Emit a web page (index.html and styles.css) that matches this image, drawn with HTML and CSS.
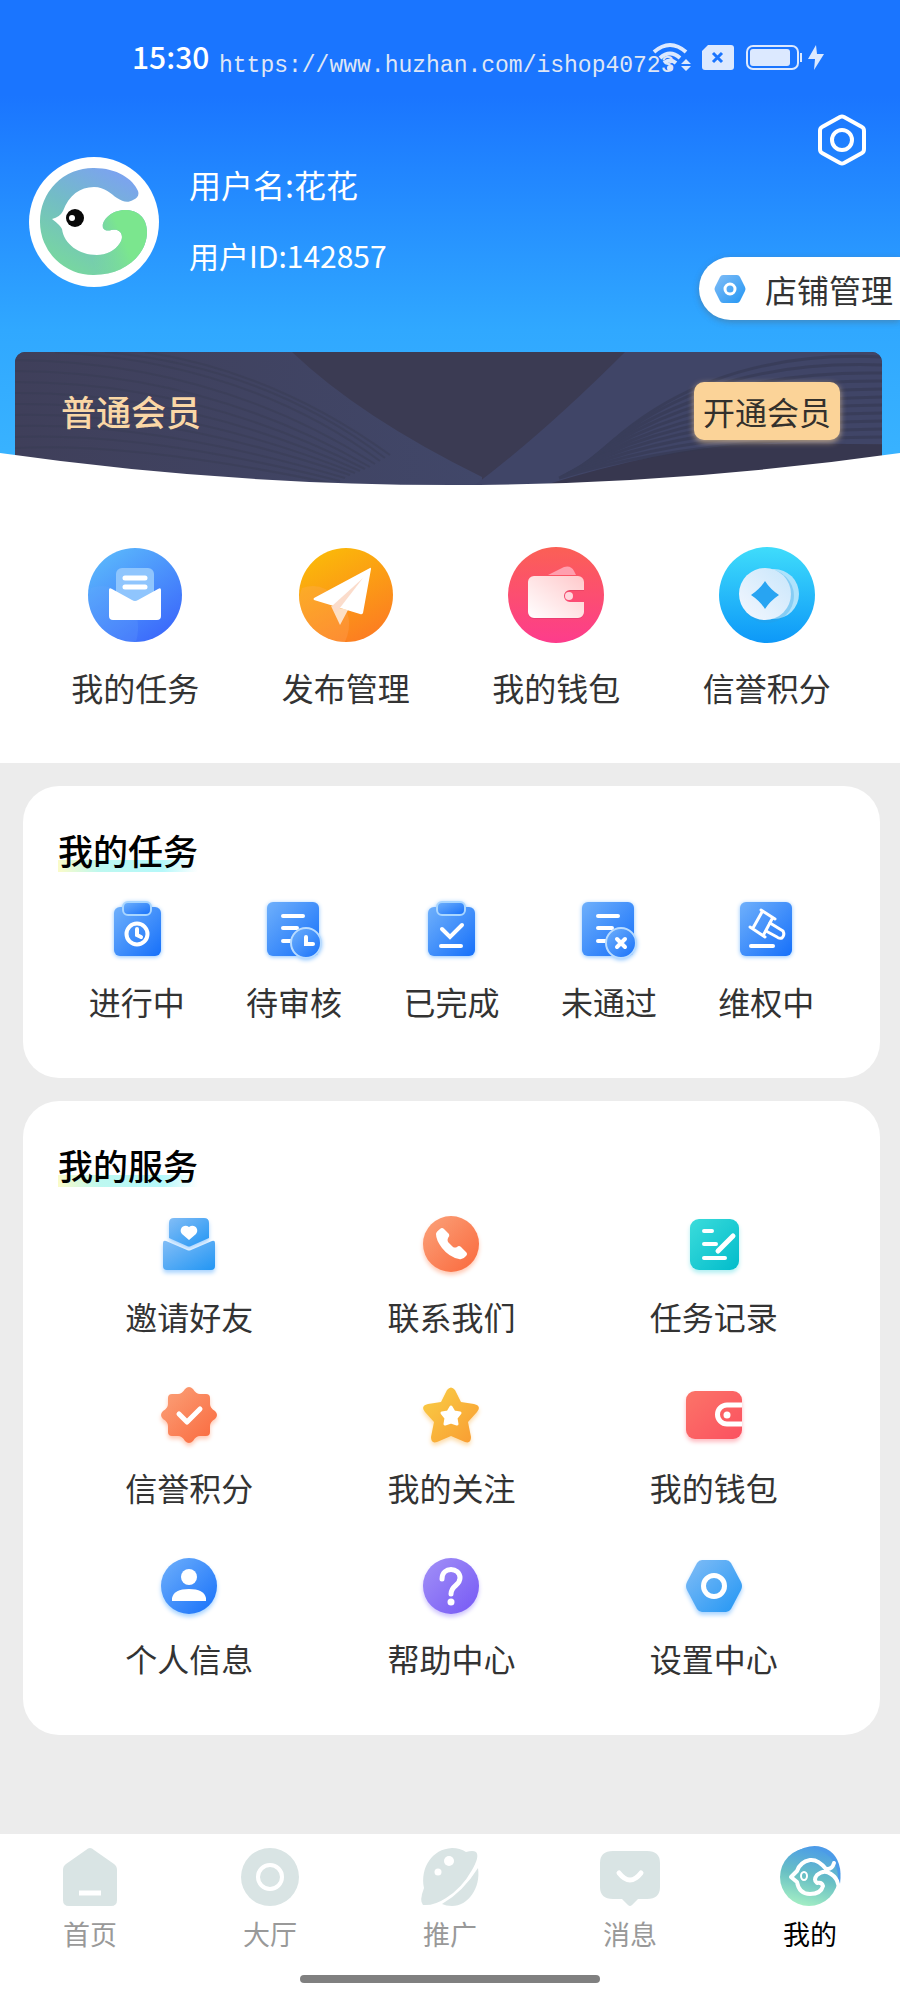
FILE: index.html
```html
<!DOCTYPE html>
<html lang="zh-CN">
<head>
<meta charset="utf-8">
<meta name="viewport" content="width=device-width, initial-scale=1">
<title>我的</title>
<link rel="stylesheet" href="styles.css">
</head>
<body>
<svg class="defs" width="0" height="0" aria-hidden="true">
  <defs>
    <linearGradient id="gBlue" x1="0" y1="0" x2="1" y2="1"><stop offset="0" stop-color="#6fb0fb"/><stop offset="1" stop-color="#1670fa"/></linearGradient>
    <linearGradient id="gMail" x1="0.1" y1="0" x2="0.8" y2="1"><stop offset="0" stop-color="#5cbcfc"/><stop offset="1" stop-color="#3a66fb"/></linearGradient>
    <linearGradient id="gPlane" x1="0.2" y1="0" x2="0.7" y2="1"><stop offset="0" stop-color="#fbbb08"/><stop offset="1" stop-color="#fc7c22"/></linearGradient>
    <linearGradient id="gRed" x1="0" y1="0" x2="0" y2="1"><stop offset="0" stop-color="#fb6055"/><stop offset="1" stop-color="#fd3c8c"/></linearGradient>
    <linearGradient id="gCyan" x1="0" y1="0" x2="0" y2="1"><stop offset="0" stop-color="#3fdcfb"/><stop offset="1" stop-color="#0d98f8"/></linearGradient>
    <linearGradient id="gWalletBody" x1="0" y1="1" x2="1" y2="0"><stop offset="0" stop-color="#fff"/><stop offset="1" stop-color="#ffc9cb"/></linearGradient>
    <linearGradient id="gCoin" x1="1" y1="0" x2="0" y2="1"><stop offset="0" stop-color="#c8e6fb"/><stop offset="1" stop-color="#f4f7fe"/></linearGradient>
    <linearGradient id="gSky" x1="0" y1="0" x2="1" y2="1"><stop offset="0" stop-color="#82bdf6"/><stop offset="1" stop-color="#2296f4"/></linearGradient>
    <linearGradient id="gOrange" x1="0" y1="0" x2="1" y2="1"><stop offset="0" stop-color="#fba27a"/><stop offset="1" stop-color="#fa683c"/></linearGradient>
    <linearGradient id="gGold" x1="0" y1="0" x2="1" y2="1"><stop offset="0" stop-color="#f9cf45"/><stop offset="1" stop-color="#f99b32"/></linearGradient>
    <linearGradient id="gTeal" x1="0" y1="0" x2="1" y2="1"><stop offset="0" stop-color="#3bdcdb"/><stop offset="1" stop-color="#02bccb"/></linearGradient>
    <linearGradient id="gCoral" x1="0" y1="0" x2="1" y2="1"><stop offset="0" stop-color="#fb7468"/><stop offset="1" stop-color="#fb5160"/></linearGradient>
    <linearGradient id="gViolet" x1="0" y1="0" x2="1" y2="1"><stop offset="0" stop-color="#a291f7"/><stop offset="1" stop-color="#7658f5"/></linearGradient>
    <linearGradient id="gBird" x1="0.8" y1="0.1" x2="0.3" y2="1"><stop offset="0" stop-color="#7ba4ee"/><stop offset="0.45" stop-color="#73bcc6"/><stop offset="1" stop-color="#78d89e"/></linearGradient>
    <linearGradient id="gWing" x1="0" y1="0.8" x2="0.6" y2="0.5"><stop offset="0" stop-color="#7be68e" stop-opacity="0"/><stop offset="1" stop-color="#7be68e"/></linearGradient>
    <linearGradient id="gMine" x1="0.6" y1="0" x2="0.35" y2="1"><stop offset="0" stop-color="#4c9ee6"/><stop offset="0.5" stop-color="#69c0c4"/><stop offset="1" stop-color="#a5efc4"/></linearGradient>
    <linearGradient id="gBeam" x1="0" y1="0" x2="1" y2="0"><stop offset="0" stop-color="#3f3f5a"/><stop offset="1" stop-color="#414769"/></linearGradient>
  </defs>
</svg>

<header class="hero">
  <div class="status">
    <time class="clock">15:30</time>
    <svg class="signals" width="174" height="36" viewBox="0 0 174 36" aria-hidden="true">
      <g fill="none" stroke="#dce9ff" stroke-width="4">
        <path d="M4 12Q20 -2 36 12"/><path d="M10 18Q20 9 30 18"/><path d="M14 23Q20 18 26 23"/>
      </g>
      <circle cx="20" cy="28" r="3" fill="#dce9ff"/>
      <path d="M31 24l5-5 5 5zM31 26l5 5 5-5z" fill="#dce9ff"/>
      <path d="M58 5h23a3 3 0 0 1 3 3v19a3 3 0 0 1-3 3H55a3 3 0 0 1-3-3V11z" fill="#dce9ff"/>
      <path d="M63 13l9 9M72 13l-9 9" stroke="#1a75ff" stroke-width="3"/>
      <rect x="97" y="6" width="51" height="23" rx="6" fill="none" stroke="#dce9ff" stroke-width="2"/>
      <rect x="100" y="9" width="40" height="17" rx="3" fill="#dce9ff"/>
      <rect x="150" y="13" width="2" height="9" fill="#dce9ff"/>
      <path d="M166 5L158 19h7l-1 11 10-16h-7z" fill="#dce9ff"/>
    </svg>
    <span class="watermark">https://www.huzhan.com/ishop40723</span>
  </div>

  <div class="profile">
    <svg class="avatar" width="130" height="130" viewBox="0 0 130 130" role="img" aria-label="头像">
      <circle cx="65" cy="65" r="65" fill="#fff"/>
      <path d="M109 34C104 22 88 11 65 11A53 53 0 0 0 11 65A53 53 0 0 0 65 118C95 118 118 98 118 75C118 60 108 53 96 53C82 53 72 64 74 71C77 76 83 72 88 73C94 75 94 82 91 86C86 94 77 98 68 98C50 98 35 87 33 72Q31 68 23 62Q31 60 34 54C40 38 51 30 65 30C76 30 82 37 88 41C94 45 99 46 104 43Q111 40 109 34Z" fill="url(#gBird)"/>
      <path d="M65 118C95 118 118 98 118 75C118 60 108 53 96 53C82 53 72 64 74 71C77 76 83 72 88 73C94 75 94 82 91 86C86 94 77 98 68 98C62 98 62 118 65 118Z" fill="url(#gWing)"/>
      <circle cx="46" cy="61" r="9" fill="#080808"/><circle cx="43" cy="61" r="3" fill="#fff"/>
    </svg>
    <div class="who">
      <p class="who-name">用户名:花花</p>
      <p class="who-id">用户ID:142857</p>
    </div>
    <div class="actions">
      <button class="gear" type="button" aria-label="设置">
        <svg width="48" height="52" viewBox="0 0 48 52" fill="none" stroke="#fff" stroke-width="4" stroke-linejoin="round">
          <path d="M22 3Q24 2 26 3L44 13Q46 14 46 17V35Q46 38 44 39L26 49Q24 50 22 49L4 39Q2 38 2 35V17Q2 14 4 13Z"/>
          <circle cx="24" cy="26" r="10"/>
        </svg>
      </button>
      <button class="shop" type="button">
        <svg width="32" height="32" viewBox="0 0 32 32" aria-hidden="true">
          <path d="M9 2h14q2 0 3 2l5 10q1 2 0 4l-5 10q-1 2-3 2H9q-2 0-3-2L1 18q-1-2 0-4L6 4q1-2 3-2z" fill="url(#gSky)"/>
          <circle cx="16" cy="16" r="5" fill="none" stroke="#fff" stroke-width="3"/>
        </svg>
        店铺管理
      </button>
    </div>
  </div>

  <section class="member">
    <svg class="member-art" viewBox="0 0 867 133" preserveAspectRatio="none" aria-hidden="true">
      <rect width="867" height="133" fill="#3b3b53"/>
      <path d="M0 0H277Q345 65 467 125V133H0Z" fill="url(#gBeam)"/>
      <path d="M610 0Q530 80 460 133H540Q650 98 730 92H867V0Z" fill="#404567"/>
      <path d="M530 133Q650 96 730 93Q800 90 867 93V133Z" fill="#37374f"/>
      <g fill="none" stroke="#343850" stroke-width="3" opacity="0.55">
        <path d="M570 116Q680 -4 867 5"/><path d="M567 117Q675 6 867 13"/><path d="M564 118Q670 18 867 21"/>
        <path d="M561 119Q668 28 867 29"/><path d="M558 120Q666 38 867 37"/><path d="M555 121Q664 48 867 45"/>
        <path d="M552 122Q662 56 867 53"/><path d="M550 123Q662 64 867 61"/><path d="M548 124Q664 72 867 69"/>
        <path d="M546 125Q666 80 867 77"/><path d="M544 126Q668 87 867 85"/>
      </g>
      <g fill="none" stroke="#393d54" stroke-width="2" opacity="0.5">
        <path d="M0 8Q200 10 360 112"/><path d="M0 19Q190 20 355 115"/><path d="M0 30Q180 30 350 117"/>
        <path d="M0 41Q170 40 345 119"/><path d="M0 52Q160 50 340 121"/><path d="M0 63Q150 60 335 123"/>
        <path d="M0 74Q140 70 330 126"/><path d="M0 85Q130 80 325 129"/><path d="M0 96Q120 90 320 132"/>
        <path d="M40 0Q230 10 365 109"/><path d="M90 0Q250 15 370 106"/><path d="M130 0Q260 20 375 103"/>
      </g>
    </svg>
    <h1 class="member-level">普通会员</h1>
    <button class="member-open" type="button">开通会员</button>
  </section>
  <svg class="arc" viewBox="0 0 900 34" preserveAspectRatio="none" aria-hidden="true"><path d="M0 1Q450 65 900 1V34H0Z" fill="#fff"/></svg>
</header>

<nav class="quick" aria-label="快捷入口">
  <a class="tile" href="#tasks">
    <svg width="96" height="96" viewBox="0 0 96 96" aria-hidden="true">
      <circle cx="48" cy="48" r="47" fill="url(#gMail)"/>
      <path d="M2 58A47 47 0 0 0 49 95Q56 70 40 52Q24 34 4 41Q0 50 2 58Z" fill="#6ea8ff" opacity="0.2"/>
      <rect x="29" y="21" width="38" height="40" rx="6" fill="#8fc5fd"/>
      <path d="M38 31h20M38 40h20" stroke="#fff" stroke-width="5" stroke-linecap="round"/>
      <path d="M22 43q0-3 3-1L45 53q3 2 6 0L71 42q3-2 3 1V69q0 4-4 4H26q-4 0-4-4z" fill="#fff"/>
    </svg>
    <span>我的任务</span>
  </a>
  <a class="tile" href="#publish">
    <svg width="96" height="96" viewBox="0 0 96 96" aria-hidden="true">
      <circle cx="48" cy="48" r="47" fill="url(#gPlane)"/>
      <path d="M2 58A47 47 0 0 0 47 95Q58 70 40 52Q24 34 4 41Q0 50 2 58Z" fill="#ffb070" opacity="0.25"/>
      <path d="M33 59L42 78L50 63Z" fill="#fde0c4"/>
      <path d="M72 21Q73 20 73 22L65 66Q64 68 62 67L16 53Q15 52 16 51Z" fill="#fff"/>
      <path d="M65 31L34 59L38 66Z" fill="#fbdccb"/>
    </svg>
    <span>发布管理</span>
  </a>
  <a class="tile" href="#wallet">
    <svg width="96" height="96" viewBox="0 0 96 96" aria-hidden="true">
      <circle cx="48" cy="48" r="48" fill="url(#gRed)"/>
      <path d="M40 28L56 20Q63 18 66 24L68 28Z" fill="#ff9fae"/>
      <path d="M26 30H70a6 6 0 0 1 6 6V44H62a5 5 0 0 0 0 11H76V66a6 6 0 0 1-6 6H26a6 6 0 0 1-6-6V36a6 6 0 0 1 6-6z" fill="#c52a55" opacity="0.3"/>
      <path d="M26 29H70a6 6 0 0 1 6 6V43H62a6 6 0 0 0 0 12H76V65a6 6 0 0 1-6 6H26a6 6 0 0 1-6-6V35a6 6 0 0 1 6-6z" fill="url(#gWalletBody)"/>
      <circle cx="61" cy="49" r="4" fill="#ffd6dc"/>
    </svg>
    <span>我的钱包</span>
  </a>
  <a class="tile" href="#credit">
    <svg width="96" height="96" viewBox="0 0 96 96" aria-hidden="true">
      <circle cx="48" cy="48" r="48" fill="url(#gCyan)"/>
      <circle cx="55" cy="47" r="25" fill="#aee3fc"/>
      <circle cx="48" cy="49" r="27" fill="#2a9be0" opacity="0.3"/>
      <circle cx="46" cy="47" r="26" fill="url(#gCoin)"/>
      <path d="M46 34Q51 42 60 48Q51 54 46 62Q41 54 32 48Q41 42 46 34Z" fill="#28a4f2"/>
    </svg>
    <span>信誉积分</span>
  </a>
</nav>

<main class="panels">
  <section class="panel" id="tasks">
    <h2 class="panel-title">我的任务</h2>
    <div class="grid grid-5">
      <a class="item" href="#doing">
        <svg class="glow" width="56" height="56" viewBox="0 0 56 56" aria-hidden="true">
          <rect x="5" y="6" width="47" height="49" rx="6" fill="url(#gBlue)"/>
          <rect x="14" y="1" width="28" height="13" rx="5" fill="url(#gBlue)" stroke="#a9d6ff" stroke-width="2"/>
          <circle cx="28" cy="33" r="10.500" fill="none" stroke="#fff" stroke-width="4"/>
          <path d="M28 28v6l4 2" fill="none" stroke="#fff" stroke-width="4" stroke-linecap="round"/>
        </svg>
        <span>进行中</span>
      </a>
      <a class="item" href="#review">
        <svg class="glow" width="56" height="56" viewBox="0 0 56 56" aria-hidden="true">
          <rect x="1" y="1" width="52" height="54" rx="6" fill="url(#gBlue)"/>
          <path d="M17 15h20M17 27h14M17 40h10" stroke="#fff" stroke-width="4" stroke-linecap="round"/>
          <circle cx="40" cy="42" r="15" fill="url(#gBlue)" stroke="#b9dcff" stroke-width="2"/>
          <path d="M40 36v7h7" fill="none" stroke="#fff" stroke-width="4" stroke-linecap="round"/>
        </svg>
        <span>待审核</span>
      </a>
      <a class="item" href="#done">
        <svg class="glow" width="56" height="56" viewBox="0 0 56 56" aria-hidden="true">
          <rect x="5" y="6" width="47" height="49" rx="6" fill="url(#gBlue)"/>
          <rect x="14" y="1" width="28" height="13" rx="5" fill="url(#gBlue)" stroke="#a9d6ff" stroke-width="2"/>
          <path d="M19 28l8 8 12-12M18 45h20" fill="none" stroke="#fff" stroke-width="4" stroke-linecap="round"/>
        </svg>
        <span>已完成</span>
      </a>
      <a class="item" href="#failed">
        <svg class="glow" width="56" height="56" viewBox="0 0 56 56" aria-hidden="true">
          <rect x="1" y="1" width="52" height="54" rx="6" fill="url(#gBlue)"/>
          <path d="M17 15h20M17 27h14M17 40h10" stroke="#fff" stroke-width="4" stroke-linecap="round"/>
          <circle cx="40" cy="42" r="15" fill="url(#gBlue)" stroke="#b9dcff" stroke-width="2"/>
          <path d="M36 38l8 8M44 38l-8 8" stroke="#fff" stroke-width="4" stroke-linecap="round"/>
        </svg>
        <span>未通过</span>
      </a>
      <a class="item" href="#rights">
        <svg class="glow" width="56" height="56" viewBox="0 0 56 56" aria-hidden="true">
          <rect x="2" y="1" width="52" height="54" rx="6" fill="url(#gBlue)"/>
          <g fill="none" stroke="#fff" stroke-width="3" stroke-linecap="round" stroke-linejoin="round">
            <path d="M23 9L37 18M34 18L26 33M12 26L27 36M24 11L15 27"/>
            <path d="M32 22L45 30Q47 34 44 37Q41 38 39 36L28 30"/>
          </g>
          <path d="M13 45h22" stroke="#fff" stroke-width="4" stroke-linecap="round"/>
        </svg>
        <span>维权中</span>
      </a>
    </div>
  </section>

  <section class="panel" id="services">
    <h2 class="panel-title">我的服务</h2>
    <div class="grid grid-3">
      <a class="item" href="#invite">
        <svg class="shade shade-blue" width="56" height="56" viewBox="0 0 56 56" aria-hidden="true">
          <path d="M13 2H43q5 0 5 5V22L30 30q-2 1-4 0L8 22V7q0-5 5-5z" fill="url(#gSky)"/>
          <path d="M2 27q0-3 3-2L26 34q2 1 4 0L51 25q3-1 3 2V50q0 4-4 4H6q-4 0-4-4z" fill="url(#gSky)"/>
          <path d="M28 24L21 18C17 13 23 7 28 11C33 7 39 13 35 18Z" fill="#fff"/>
        </svg>
        <span>邀请好友</span>
      </a>
      <a class="item" href="#contact">
        <svg class="shade shade-orange" width="56" height="56" viewBox="0 0 56 56" aria-hidden="true">
          <circle cx="28" cy="28" r="28" fill="url(#gOrange)"/>
          <path d="M17 13Q19 11 21 13L26 18Q27 20 25 22Q24 24 25 26L30 31Q32 32 34 31Q36 29 38 31L43 36Q45 38 43 40Q40 44 36 43Q26 41 19 32Q13 24 13 18Q13 16 17 13Z" fill="#fff"/>
        </svg>
        <span>联系我们</span>
      </a>
      <a class="item" href="#records">
        <svg class="shade shade-teal" width="56" height="56" viewBox="0 0 56 56" aria-hidden="true">
          <rect x="4" y="3" width="49" height="51" rx="9" fill="url(#gTeal)"/>
          <path d="M18 15h8M18 28h12M18 42h21" stroke="#fff" stroke-width="4" stroke-linecap="round"/>
          <path d="M32 35L47 20" stroke="#fff" stroke-width="5" stroke-linecap="round"/>
        </svg>
        <span>任务记录</span>
      </a>
      <a class="item" href="#credit">
        <svg class="shade shade-orange" width="56" height="56" viewBox="0 0 56 56" aria-hidden="true">
          <path d="M24 2Q28-2 32 2Q35 7 39 7H45Q49 7 49 11V17Q49 21 54 24Q58 28 54 32Q49 35 49 39V45Q49 49 45 49H39Q35 49 32 54Q28 58 24 54Q21 49 17 49H11Q7 49 7 45V39Q7 35 2 32Q-2 28 2 24Q7 21 7 17V11Q7 7 11 7H17Q21 7 24 2Z" fill="url(#gOrange)"/>
          <path d="M18 27l8 8 13-13" fill="none" stroke="#fff" stroke-width="5" stroke-linecap="round" stroke-linejoin="round"/>
        </svg>
        <span>信誉积分</span>
      </a>
      <a class="item" href="#follow">
        <svg class="shade shade-gold" width="56" height="56" viewBox="0 0 56 56" aria-hidden="true">
          <path d="M24 3Q28-2 32 3L38 15L51 17Q59 19 54 25L45 35L48 50Q48 57 42 55L28 49L14 55Q8 57 8 50L11 35L2 25Q-3 19 5 17L18 15Z" fill="url(#gGold)"/>
          <path d="M28 20L31 25L37 26L33 31L34 37L28 35L22 37L23 31L19 26L25 25Z" fill="#fff" stroke="#fff" stroke-width="3" stroke-linejoin="round"/>
        </svg>
        <span>我的关注</span>
      </a>
      <a class="item" href="#wallet">
        <svg class="shade shade-red" width="56" height="56" viewBox="0 0 56 56" aria-hidden="true">
          <rect x="0" y="4" width="56" height="48" rx="9" fill="url(#gCoral)"/>
          <path d="M56 18H41a9 9 0 0 0 0 19H56" fill="none" stroke="#fff" stroke-width="5"/>
          <circle cx="41" cy="28" r="3.500" fill="#fff"/>
        </svg>
        <span>我的钱包</span>
      </a>
      <a class="item" href="#me">
        <svg class="shade shade-blue" width="56" height="56" viewBox="0 0 56 56" aria-hidden="true">
          <circle cx="28" cy="28" r="28" fill="url(#gBlue)"/>
          <circle cx="28" cy="19" r="8" fill="#fff"/>
          <path d="M11 40Q13 31 28 31Q43 31 45 40V43H11Z" fill="#fff"/>
        </svg>
        <span>个人信息</span>
      </a>
      <a class="item" href="#help">
        <svg class="shade shade-violet" width="56" height="56" viewBox="0 0 56 56" aria-hidden="true">
          <circle cx="28" cy="28" r="28" fill="url(#gViolet)"/>
          <path d="M19 21C19 8 37 9 37 20C37 28 28 27 28 36" fill="none" stroke="#fff" stroke-width="5" stroke-linecap="round"/>
          <circle cx="28" cy="44" r="3.500" fill="#fff"/>
        </svg>
        <span>帮助中心</span>
      </a>
      <a class="item" href="#settings">
        <svg class="shade shade-blue" width="56" height="56" viewBox="0 0 56 56" aria-hidden="true">
          <path d="M16 2H40Q43 2 45 5L55 24Q57 28 55 32L45 51Q43 54 40 54H16Q13 54 11 51L1 32Q-1 28 1 24L11 5Q13 2 16 2Z" fill="url(#gSky)"/>
          <circle cx="28" cy="28" r="10.500" fill="none" stroke="#fff" stroke-width="5"/>
        </svg>
        <span>设置中心</span>
      </a>
    </div>
  </section>
</main>

<footer class="dock">
  <nav class="tabs" aria-label="主导航">
    <a class="tab" href="#home">
      <svg width="60" height="60" viewBox="0 0 60 60" aria-hidden="true">
        <path d="M26 4Q30 0 34 4L54 18Q57 20 57 24V54Q57 60 51 60H9Q3 60 3 54V24Q3 20 6 18Z" fill="#d9e4e4"/>
        <path d="M19 47h22" stroke="#fff" stroke-width="5"/>
      </svg>
      <span>首页</span>
    </a>
    <a class="tab" href="#hall">
      <svg width="60" height="60" viewBox="0 0 60 60" aria-hidden="true">
        <circle cx="30" cy="31" r="29" fill="#d9e4e4"/>
        <circle cx="30" cy="31" r="12" fill="none" stroke="#fff" stroke-width="4"/>
      </svg>
      <span>大厅</span>
    </a>
    <a class="tab" href="#promote">
      <svg width="60" height="60" viewBox="0 0 60 60" aria-hidden="true">
        <path d="M46 6Q53 4 56 6Q60 10 52 24Q42 42 26 52Q14 60 3 59Q-1 55 4 42C0 22 12 3 32 2Q40 2 46 6Z" fill="#d9e4e4"/>
        <path d="M58 22C61 42 48 60 32 60Q26 60 22 58Q43 46 58 22Z" fill="#d9e4e4"/>
        <circle cx="29" cy="15" r="5" fill="#fff"/><circle cx="18" cy="26" r="3.500" fill="#fff"/>
      </svg>
      <span>推广</span>
    </a>
    <a class="tab" href="#messages">
      <svg width="60" height="60" viewBox="0 0 60 60" aria-hidden="true">
        <path d="M13 5H47Q60 5 60 17V41Q60 53 47 53H38L32 59Q30 61 28 59L22 53H13Q0 53 0 41V17Q0 5 13 5Z" fill="#d9e4e4"/>
        <path d="M19 27Q30 41 41 27" fill="none" stroke="#fff" stroke-width="5" stroke-linecap="round"/>
      </svg>
      <span>消息</span>
    </a>
    <a class="tab tab-on" href="#mine" aria-current="page">
      <svg width="60" height="60" viewBox="0 0 60 60" aria-hidden="true">
        <path d="M14 7Q34-6 50 5Q63 15 60 38L50 34Z" fill="#4c9be8"/>
        <circle cx="29" cy="31" r="29" fill="url(#gMine)"/>
        <path d="M54 17Q52 24 46 23Q38 13 30 14Q20 16 17 25L11 31L17 36Q19 48 30 48Q41 48 43 40Q42 36 37 37Q33 34 37 29Q44 23 51 28Q57 32 58 38" fill="none" stroke="#fff" stroke-width="4" stroke-linecap="round" stroke-linejoin="round"/>
        <ellipse cx="24" cy="30" rx="3" ry="4" fill="none" stroke="#fff" stroke-width="2"/>
      </svg>
      <span>我的</span>
    </a>
  </nav>
  <div class="home-bar"></div>
</footer>
</body>
</html>
```
FILE: styles.css
```css
* {
  box-sizing: border-box;
}

body {
  margin: 0;
  min-height: 100vh;
  display: flex;
  flex-direction: column;
  background: #ececec;
  color: #333;
  font-family: "Noto Sans CJK SC", sans-serif;
  font-size: 32px;
  line-height: 40px;
}

h1, h2, p {
  margin: 0;
}

a {
  color: inherit;
  text-decoration: none;
}

button {
  border: 0;
  padding: 0;
  background: none;
  color: inherit;
  font: inherit;
  cursor: pointer;
}

svg {
  display: block;
  flex: none;
  overflow: visible;
}

.defs {
  position: absolute;
}

/* Header */

.hero {
  position: relative;
  background: linear-gradient(#1a75ff 95px, #30a8ff 330px, #38b2ff 450px);
  color: #fff;
}

.status {
  position: relative;
  display: flex;
  align-items: flex-start;
  justify-content: space-between;
  padding: 40px 76px 0 132px;
}

.clock {
  font-size: 30px;
  font-weight: 500;
  line-height: 32px;
}

.watermark {
  position: absolute;
  top: 50px;
  left: 219px;
  font-family: "Liberation Mono", monospace;
  font-size: 23px;
  line-height: 32px;
  color: #dfe6f5;
}

.profile {
  display: flex;
  align-items: flex-start;
  padding: 38px 0 32px 29px;
}

.avatar {
  margin-top: 43px;
}

.who {
  flex: 1;
  display: grid;
  gap: 31px;
  padding: 50px 0 0 30px;
}

.who-id {
  font-size: 30px;
}

.actions {
  display: flex;
  flex-direction: column;
  align-items: flex-end;
  gap: 91px;
}

.gear {
  margin-right: 34px;
}

.shop {
  display: flex;
  align-items: center;
  gap: 19px;
  height: 63px;
  padding: 0 7px 0 15px;
  border-radius: 32px 0 0 32px;
  background: #fff;
  color: #333;
  box-shadow: 0 2px 6px rgba(90, 90, 90, 0.4);
}

.member {
  position: relative;
  display: flex;
  align-items: flex-start;
  justify-content: space-between;
  margin: 0 18px 0 15px;
  padding: 30px 42px 45px 46px;
  border-radius: 10px 10px 0 0;
  overflow: hidden;
}

.member-art {
  position: absolute;
  inset: 0;
  width: 100%;
  height: 100%;
}

.member-level {
  position: relative;
  font-size: 35px;
  font-weight: 500;
  line-height: 58px;
  color: #fad7a6;
}

.member-open {
  position: relative;
  padding: 0 9px;
  line-height: 58px;
  border-radius: 10px;
  background: #fbd398;
  color: #33302c;
  box-shadow: 0 2px 6px rgba(251, 211, 152, 0.7);
}

.arc {
  position: absolute;
  bottom: -1px;
  left: 0;
  width: 100%;
  height: 34px;
}

/* Shortcuts */

.quick {
  display: grid;
  grid-template-columns: repeat(4, 1fr);
  padding: 62px 28px 56px 30px;
  background: #fff;
}

.tile,
.item {
  display: flex;
  flex-direction: column;
  align-items: center;
  gap: 24px;
}

/* Panels */

.panels {
  display: grid;
  gap: 23px;
  padding: 23px 20px 23px 23px;
}

.panel {
  padding: 42px 35px 57px;
  border-radius: 36px;
  background: #fff;
}

.panel-title {
  width: fit-content;
  margin-bottom: 29px;
  font-size: 35px;
  font-weight: 500;
  line-height: 44px;
  color: #000;
  background: linear-gradient(90deg, #fbfbc8, #bdf8f0 30%, #b5f8fa 75%, #fff) bottom / 100% 12px no-repeat;
}

.grid {
  display: grid;
  row-gap: 51px;
}

.grid-5 {
  grid-template-columns: repeat(5, 1fr);
}

.grid-3 {
  grid-template-columns: repeat(3, 1fr);
}

.glow {
  filter: drop-shadow(0 1px 2px #8cc4ff);
}

.shade {
  filter: drop-shadow(0 3px 2px var(--shade));
}

.shade-blue { --shade: #a9d4ff; }
.shade-orange { --shade: #ffc9b4; }
.shade-teal { --shade: #b2eff2; }
.shade-gold { --shade: #fddcaa; }
.shade-red { --shade: #ffbcc2; }
.shade-violet { --shade: #cec4fd; }

/* Bottom navigation */

.dock {
  margin-top: auto;
  padding: 12px 0 17px;
  background: #fff;
}

.tabs {
  display: grid;
  grid-template-columns: repeat(5, 1fr);
}

.tab {
  display: flex;
  flex-direction: column;
  align-items: center;
  gap: 10px;
  font-size: 27px;
  line-height: 36px;
  color: #999;
}

.tab-on {
  color: #000;
}

.home-bar {
  width: 33.33%;
  height: 8px;
  margin: 23px auto 0;
  border-radius: 4px;
  background: #808080;
}
```
